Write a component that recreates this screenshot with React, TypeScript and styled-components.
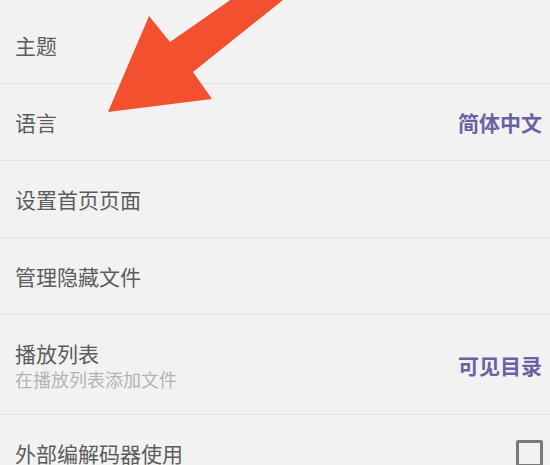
import React from 'react'
import styled, { createGlobalStyle } from 'styled-components'

const GlobalStyle = createGlobalStyle`
	html, body {
		margin: 0;
		padding: 0;
		background: #f2f2f2;
	}
	body {
		font-family: 'Noto Sans CJK SC', 'Noto Sans', sans-serif;
	}
`

interface SettingItem {
	title: string
	subtitle?: string
	value?: string
	checkbox?: boolean
}

const items: SettingItem[] = [
	{ title: '主题' },
	{ title: '语言', value: '简体中文' },
	{ title: '设置首页页面' },
	{ title: '管理隐藏文件' },
	{ title: '播放列表', subtitle: '在播放列表添加文件', value: '可见目录' },
	{ title: '外部编解码器使用', checkbox: true },
]

export default function App() {
	return (
		<Page>
			<GlobalStyle />
			<List>
				{items.map(item => (
					<Row key={item.title} $tall={!!item.subtitle}>
						<Labels>
							<Title>{item.title}</Title>
							{item.subtitle && <Subtitle>{item.subtitle}</Subtitle>}
						</Labels>
						{item.value && <Value>{item.value}</Value>}
						{item.checkbox && <Checkbox />}
					</Row>
				))}
			</List>
			<Arrow viewBox="0 0 550 465" aria-hidden>
				<polygon
					points="108,112 149,16 170,42 236,-4 288,-4 193,72 212,99"
					fill="#f3502f"
				/>
			</Arrow>
		</Page>
	)
}

const Page = styled.div`
	position: relative;
	width: 550px;
	height: 465px;
	overflow: hidden;
	background: #f2f2f2;
`

const List = styled.div`
	display: flex;
	flex-direction: column;
	padding-top: 7px;
`

const Row = styled.div<{ $tall: boolean }>`
	display: flex;
	align-items: center;
	justify-content: space-between;
	height: ${props => (props.$tall ? 99 : 76)}px;
	padding: 0 7px 0 15px;
	border-bottom: 1px solid #e3e3e3;
	flex-shrink: 0;
`

const Labels = styled.div`
	display: flex;
	flex-direction: column;
	gap: 1px;
`

const Title = styled.div`
	font-size: 21px;
	line-height: 28px;
	color: #5c5c5c;
`

const Subtitle = styled.div`
	font-size: 18px;
	line-height: 22px;
	color: #b4b4b4;
`

const Value = styled.div`
	font-size: 21px;
	line-height: 26px;
	font-weight: 700;
	color: #6b62a2;
	margin-right: 1px;
`

const Checkbox = styled.div`
	width: 21px;
	height: 21px;
	border: 3px solid #7a7a7a;
	border-radius: 2px;
`

const Arrow = styled.svg`
	position: absolute;
	left: 0;
	top: 0;
	width: 550px;
	height: 465px;
	pointer-events: none;
`
